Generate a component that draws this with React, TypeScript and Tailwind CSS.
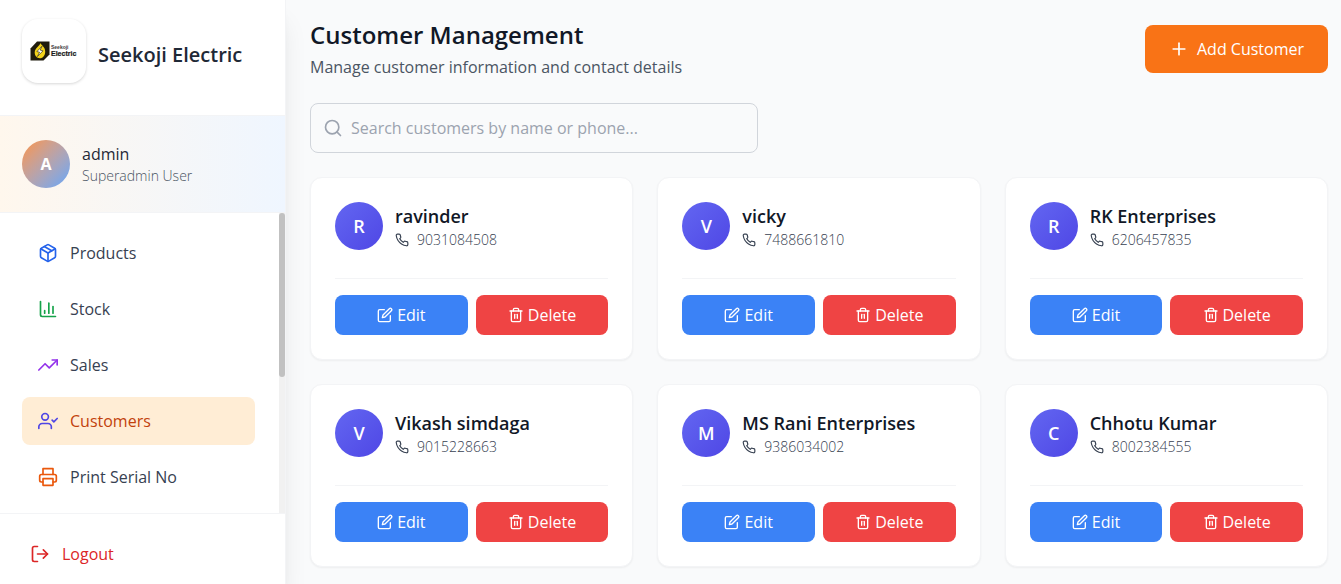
import type { IconType } from "react-icons";
import {
  FiEdit,
  FiLogOut,
  FiPackage,
  FiPhone,
  FiPlus,
  FiPrinter,
  FiSearch,
  FiTrash2,
  FiTrendingUp,
  FiUserCheck,
} from "react-icons/fi";
import { LuChartColumn } from "react-icons/lu";

interface NavItem {
  label: string;
  icon: IconType;
  color: string;
  active?: boolean;
}

interface Customer {
  name: string;
  phone: string;
}

const navItems: NavItem[] = [
  { label: "Products", icon: FiPackage, color: "text-[#2563eb]" },
  { label: "Stock", icon: LuChartColumn, color: "text-[#16a34a]" },
  { label: "Sales", icon: FiTrendingUp, color: "text-[#9333ea]" },
  { label: "Customers", icon: FiUserCheck, color: "text-[#4f46e5]", active: true },
  { label: "Print Serial No", icon: FiPrinter, color: "text-[#ea580c]" },
];

const customers: Customer[] = [
  { name: "ravinder", phone: "9031084508" },
  { name: "vicky", phone: "7488661810" },
  { name: "RK Enterprises", phone: "6206457835" },
  { name: "Vikash simdaga", phone: "9015228663" },
  { name: "MS Rani Enterprises", phone: "9386034002" },
  { name: "Chhotu Kumar", phone: "8002384555" },
];

function Logo() {
  return (
    <svg viewBox="0 0 48 20" className="h-5 w-12 font-['Liberation_Sans',sans-serif]" role="img" aria-label="Seekoji Electric">
      <path d="M7 .5h12.5v13l-6 6H.5v-12z" fill="#1f1b0c" />
      <path
        d="M10.5 2c.3 2 4.7 3.600 4.700 8.400 0 3.800-2.200 6.800-5.300 6.800s-5.200-2.600-5.200-5.700c0-2.400 1.300-3.900 2.600-5.200C8.600 5.100 9.900 3.700 10.500 2z"
        fill="#f2d21b"
      />
      <path d="M12 5.2 6.9 10.6l2.7.6-2.2 4.3 5.6-5.7-2.9-.7z" fill="#fff" stroke="#1f1b0c" strokeWidth="0.6" />
      <text x="21" y="8" fontSize="5" fontWeight="700" fill="#3a3a3a">
        Seekoji
      </text>
      <text x="21" y="15" fontSize="7" fontWeight="700" fill="#1a1a1a" stroke="#1a1a1a" strokeWidth="0.2">
        Electric
      </text>
    </svg>
  );
}

function Sidebar() {
  return (
    <aside className="z-10 flex h-full w-[286px] shrink-0 flex-col border-r border-[#f3f4f6] bg-white shadow-xl">
      <div className="flex items-center gap-3 border-b border-[#f3f4f6] px-[22px] pt-[19px] pb-8">
        <div className="flex size-16 items-center justify-center rounded-2xl bg-white shadow-[0_1px_3px_rgba(0,0,0,0.16)]">
          <Logo />
        </div>
        <span className="pt-2 text-xl font-semibold text-[#1f2937]">Seekoji Electric</span>
      </div>

      <div className="flex items-center gap-3 border-b border-[#f3f4f6] bg-linear-to-r from-[#fff7ed] to-[#eff6ff] px-[22px] py-6">
        <div className="flex size-12 items-center justify-center rounded-full bg-linear-to-br from-[#fb923c] to-[#60a5fa] font-bold text-white">
          A
        </div>
        <div>
          <p className="font-medium text-[#1f2937]">admin</p>
          <p className="text-sm font-light text-[#4b5563]">Superadmin User</p>
        </div>
      </div>

      <div className="flex min-h-0 flex-1 justify-between overflow-hidden">
        <nav className="flex flex-1 flex-col gap-2 pt-4 pr-6 pl-[22px]">
          {navItems.map(({ label, icon: Icon, color, active }) => (
            <a
              key={label}
              href="#"
              aria-current={active ? "page" : undefined}
              className={`flex h-12 shrink-0 items-center gap-3 rounded-lg px-4 ${
                active ? "bg-[#ffedd5] text-[#c2410c]" : "text-[#374151]"
              }`}
            >
              <Icon size={20} className={color} />
              {label}
            </a>
          ))}
        </nav>
        {/* Scroll track and thumb */}
        <div className="w-[6px] bg-[#f1f1f1]">
          <div className="h-[164px] rounded-full bg-[#c1c1c1]" />
        </div>
      </div>

      <div className="border-t border-[#f3f4f6] px-[22px] pt-4 pb-[6px]">
        <button type="button" className="flex h-12 w-full items-center gap-3 rounded-lg px-2 text-[#dc2626]">
          <FiLogOut size={20} />
          Logout
        </button>
      </div>
    </aside>
  );
}

function CustomerCard({ customer }: { customer: Customer }) {
  return (
    <article className="rounded-xl border border-[#f3f4f6] bg-white p-6 shadow-[0_1px_2px_rgba(0,0,0,0.05)]">
      <div className="mb-7 flex items-center gap-3">
        <div className="flex size-12 shrink-0 items-center justify-center rounded-full bg-linear-to-br from-[#6366f1] to-[#4f46e5] text-lg font-semibold text-white">
          {customer.name[0].toUpperCase()}
        </div>
        <div>
          <h3 className="text-lg leading-7 font-semibold text-[#111827]">{customer.name}</h3>
          <p className="flex items-center gap-2 text-sm font-light text-[#374151]">
            <FiPhone size={14} />
            {customer.phone}
          </p>
        </div>
      </div>
      <div className="flex gap-2 border-t border-[#f3f4f6] pt-4 text-white">
        <button type="button" className="flex h-10 flex-1 items-center justify-center gap-1 rounded-lg bg-[#3b82f6]">
          <FiEdit size={16} />
          Edit
        </button>
        <button type="button" className="flex h-10 flex-1 items-center justify-center gap-1 rounded-lg bg-[#ef4444]">
          <FiTrash2 size={16} />
          Delete
        </button>
      </div>
    </article>
  );
}

export default function App() {
  return (
    <div className="flex h-screen overflow-hidden bg-[#f9fafb] font-['Open_Sans',sans-serif] text-base">
      <Sidebar />
      <main className="min-w-0 flex-1 overflow-hidden pt-[19px] pr-[13px] pl-6">
        <header className="mb-6 flex items-center justify-between">
          <div>
            <h1 className="text-2xl font-semibold text-[#111827]">Customer Management</h1>
            <p className="mt-1 text-[#4b5563]">Manage customer information and contact details</p>
          </div>
          <button
            type="button"
            className="flex h-12 items-center gap-2 rounded-lg bg-[#f97316] px-6 font-medium text-white"
          >
            <FiPlus size={20} />
            Add Customer
          </button>
        </header>

        <label className="mb-6 flex h-[50px] max-w-md items-center gap-2 rounded-lg border border-[#d1d5db] px-3 text-[#9ca3af]">
          <FiSearch size={20} className="shrink-0" />
          <input
            type="text"
            aria-label="Search customers"
            placeholder="Search customers by name or phone..."
            className="min-w-0 flex-1 text-[#111827] outline-none placeholder:text-[#9ca3af]"
          />
        </label>

        <div className="grid grid-cols-3 gap-6">
          {customers.map((customer) => (
            <CustomerCard key={customer.phone} customer={customer} />
          ))}
        </div>
      </main>
    </div>
  );
}
